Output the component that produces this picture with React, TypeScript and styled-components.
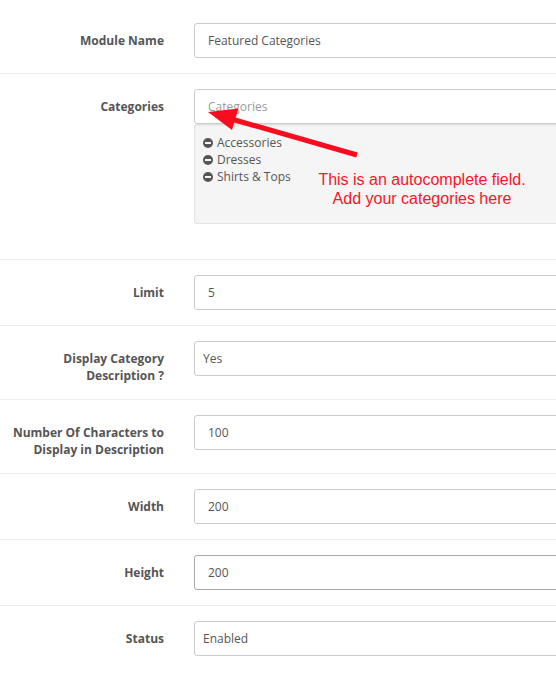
import React from "react";
import styled, { createGlobalStyle } from "styled-components";

const GlobalStyle = createGlobalStyle`
  html, body {
    margin: 0;
    padding: 0;
    background: #ffffff;
  }
  body {
    font-family: "Open Sans", "Liberation Sans", sans-serif;
    font-size: 12px;
    color: #555555;
    overflow: hidden;
  }
  * { box-sizing: border-box; }
`;

const Page = styled.div`
  position: relative;
  width: 556px;
  height: 676px;
  overflow: hidden;
  padding-top: 8px;
`;

const Form = styled.form`
  width: 640px;
  margin: 0;
`;

const Row = styled.div`
  display: grid;
  grid-template-columns: 164px 1fr;
  column-gap: 30px;
  padding: 15px 0;
  border-top: 1px solid #ededed;
  &:first-child {
    border-top: none;
  }
`;

const Label = styled.label`
  display: block;
  padding-top: 9px;
  text-align: right;
  font-weight: 700;
  font-size: 12px;
  line-height: 17px;
  color: #555555;
`;

const Field = styled.div`
  display: flex;
  flex-direction: column;
  min-width: 0;
`;

const TextInput = styled.input<{ $active?: boolean }>`
  display: block;
  width: 100%;
  height: 35px;
  padding: 8px 13px;
  font-family: "Open Sans", "Liberation Sans", sans-serif;
  font-size: 12px;
  line-height: 17px;
  color: #555555;
  background: #ffffff;
  border: 1px solid ${(p) => (p.$active ? "#a9a9a9" : "#cccccc")};
  border-radius: 3px;
  box-shadow: none;
  outline: none;
  &::placeholder {
    color: #999999;
  }
`;

const Select = styled.select`
  display: block;
  width: 100%;
  height: 35px;
  padding: 0 8px;
  font-family: "Open Sans", "Liberation Sans", sans-serif;
  font-size: 12px;
  color: #555555;
  background: #ffffff;
  border: 1px solid #cccccc;
  border-radius: 3px;
  appearance: none;
  -webkit-appearance: none;
  outline: none;
`;

const Well = styled.div`
  height: 100px;
  margin-bottom: 20px;
  padding: 9px 8px;
  background: #f5f5f5;
  border: 1px solid #e3e3e3;
  border-radius: 3px;
  box-shadow: inset 0 1px 1px rgba(0, 0, 0, 0.05);
  overflow: hidden;
`;

const Item = styled.div`
  display: flex;
  align-items: center;
  gap: 4px;
  font-size: 12px;
  line-height: 17px;
  color: #555555;
`;

const MinusIcon = () => (
  <svg width="10" height="10" viewBox="0 0 10 10" aria-hidden="true">
    <circle cx="5" cy="5" r="5" fill="#555555" />
    <rect x="2" y="4" width="6" height="2" fill="#f5f5f5" />
  </svg>
);

const Note = styled.div`
  position: absolute;
  left: 300px;
  top: 170px;
  width: 244px;
  text-align: center;
  font-family: "Liberation Sans", Arial, sans-serif;
  font-size: 16px;
  line-height: 19px;
  color: #f9142a;
  pointer-events: none;
`;

const ArrowLayer = styled.svg`
  position: absolute;
  left: 0;
  top: 0;
  pointer-events: none;
`;

const Arrow = () => (
  <ArrowLayer width="556" height="676" viewBox="0 0 556 676">
    <line x1="357" y1="155" x2="228" y2="118" stroke="#f80d1e" strokeWidth="5" />
    <polygon points="208,112 238.5,108.5 232,130" fill="#f80d1e" />
  </ArrowLayer>
);

type Simple = { label: string; value: string; kind: "input" | "select"; active?: boolean };

const rowsAfter: Simple[] = [
  { label: "Limit", value: "5", kind: "input" },
  { label: "Display Category Description ?", value: "Yes", kind: "select" },
  { label: "Number Of Characters to Display in Description", value: "100", kind: "input" },
  { label: "Width", value: "200", kind: "input" },
  { label: "Height", value: "200", kind: "input", active: true },
  { label: "Status", value: "Enabled", kind: "select" },
];

const categories = ["Accessories", "Dresses", "Shirts & Tops"];

export default function App() {
  return (
    <>
      <GlobalStyle />
      <Page>
        <Form onSubmit={(e) => e.preventDefault()}>
          <Row>
            <Label>Module Name</Label>
            <Field>
              <TextInput defaultValue="Featured Categories" />
            </Field>
          </Row>
          <Row>
            <Label>Categories</Label>
            <Field>
              <TextInput placeholder="Categories" />
              <Well>
                {categories.map((c) => (
                  <Item key={c}>
                    <MinusIcon />
                    <span>{c}</span>
                  </Item>
                ))}
              </Well>
            </Field>
          </Row>
          {rowsAfter.map((r) => (
            <Row key={r.label}>
              <Label>{r.label}</Label>
              <Field>
                {r.kind === "input" ? (
                  <TextInput defaultValue={r.value} $active={r.active} />
                ) : (
                  <Select defaultValue={r.value}>
                    <option>{r.value}</option>
                  </Select>
                )}
              </Field>
            </Row>
          ))}
        </Form>
        <Arrow />
        <Note>
          This is an autocomplete field.
          <br />
          Add your categories here
        </Note>
      </Page>
    </>
  );
}
